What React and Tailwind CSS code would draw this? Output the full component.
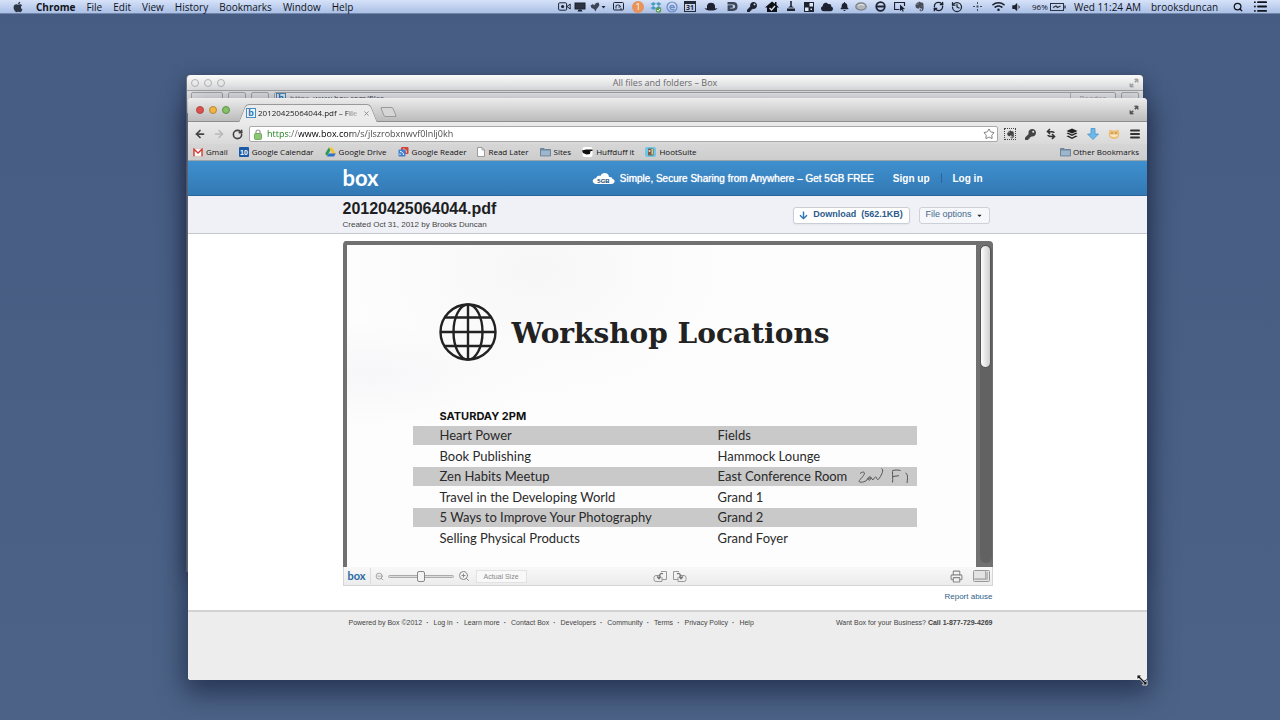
import React, { useState } from 'react';
import { RefreshCw, History, Search, Star, Menu, ArrowLeft, ArrowRight, RotateCw, X, ZoomIn, ZoomOut, Printer, List } from 'lucide-react';
import { FaApple, FaKey, FaBell, FaCloud, FaEvernote, FaWifi, FaVolumeDown, FaHome, FaArrowDown, FaCaretDown } from 'react-icons/fa';

const menus = ['File', 'Edit', 'View', 'History', 'Bookmarks', 'Window', 'Help'];

const footerLinks = ['Log in', 'Learn more', 'Contact Box', 'Developers', 'Community', 'Terms', 'Privacy Policy', 'Help'];

const workshops = [
  { name: 'Heart Power', room: 'Fields' },
  { name: 'Book Publishing', room: 'Hammock Lounge' },
  { name: 'Zen Habits Meetup', room: 'East Conference Room', note: true },
  { name: 'Travel in the Developing World', room: 'Grand 1' },
  { name: '5 Ways to Improve Your Photography', room: 'Grand 2' },
  { name: 'Selling Physical Products', room: 'Grand Foyer' },
];

const FolderIcon = () => (
  <svg width="11" height="10" viewBox="0 0 11 10">
    <path d="M.5 1.500h3.500l1 1h5.500v6.500H.5z" fill="#6f8ba8" stroke="#5a7087" strokeWidth=".7" />
    <path d="M1 3.500h9v5H1z" fill="#9db6cd" />
  </svg>
);

const GmailIcon = () => (
  <svg width="10" height="9" viewBox="0 0 10 9">
    <path d="M.5.8h9v7.400h-9z" fill="#fff" stroke="#d9a9a6" strokeWidth=".5" />
    <path d="M1 8.300V1.200l4 3.800 4-3.800v7.100" fill="none" stroke="#cf3b33" strokeWidth="1.400" />
  </svg>
);

const CalendarIcon = () => (
  <svg width="10" height="10" viewBox="0 0 10 10">
    <rect width="10" height="10" rx="1" fill="#1c5aa8" />
    <text x="5" y="7.500" fontSize="7" fontWeight="700" textAnchor="middle" fill="#fff" fontFamily="Liberation Sans, sans-serif">10</text>
  </svg>
);

const DriveIcon = () => (
  <svg width="11" height="10" viewBox="0 0 11 10">
    <path d="M3.800.5h3.200l3.800 6H7.400z" fill="#f3c52d" />
    <path d="M3.800.5 5.400 3.300 2 9.300.2 6.400z" fill="#2f9a57" />
    <path d="M3.800 6.500h7L9 9.500H2z" fill="#2f6fc9" />
  </svg>
);

const ReaderIcon = () => (
  <svg width="11" height="10" viewBox="0 0 11 10">
    <rect x="3" y="0" width="7.500" height="7" rx="1" fill="#d2443a" />
    <path d="M5 2c2 0 3.500 1.500 3.500 3.500" fill="none" stroke="#fff" strokeWidth=".9" />
    <rect x=".5" y="2.500" width="7" height="7" rx="1" fill="#3f7fd0" />
    <path d="M2 8V6.500M2 4.500c2 0 3.500 1.500 3.500 3.500" fill="none" stroke="#fff" strokeWidth="1" />
  </svg>
);

const PageIcon = () => (
  <svg width="8" height="10" viewBox="0 0 8 10">
    <path d="M.5.5h4.500l2.500 2.500v6.500h-7z" fill="#fff" stroke="#888" strokeWidth=".8" />
    <path d="M5 .5V3h2.500" fill="none" stroke="#888" strokeWidth=".7" />
  </svg>
);

const HuffIcon = () => (
  <svg width="11" height="10" viewBox="0 0 11 10">
    <rect x=".5" width="10" height="10" rx="2" fill="#fff" />
    <path d="M0 3.500 4 2.500h6.500v1.500H8.500l-.5 3-3.500.5L1 6z" fill="#111" />
  </svg>
);

const HootIcon = () => (
  <svg width="11" height="10" viewBox="0 0 11 10">
    <rect width="11" height="10" rx="2" fill="#6fc6e6" />
    <path d="M3 1.500h5.500v7H3z" fill="#75604a" />
    <circle cx="4.500" cy="4" r="1" fill="#e8e0d0" />
    <path d="M6.500 2h1.500v5.500H6.500z" fill="#d9c48e" />
  </svg>
);

const bookmarks = [
  { label: 'Gmail', Icon: GmailIcon },
  { label: 'Google Calendar', Icon: CalendarIcon },
  { label: 'Google Drive', Icon: DriveIcon },
  { label: 'Google Reader', Icon: ReaderIcon },
  { label: 'Read Later', Icon: PageIcon },
  { label: 'Sites', Icon: FolderIcon },
  { label: 'Huffduff it', Icon: HuffIcon },
  { label: 'HootSuite', Icon: HootIcon },
];

const Favicon = () => (
  <svg width="10" height="10" viewBox="0 0 10 10" className="shrink-0">
    <rect x=".5" y=".5" width="9" height="9" fill="#e9f3fb" stroke="#4b8cc0" />
    <text x="5" y="8" fontSize="9" fontWeight="700" textAnchor="middle" fill="#1d6fb2" fontFamily="Liberation Sans, sans-serif">b</text>
  </svg>
);

const ExpandIcon = ({ color }) => (
  <svg width="10" height="10" viewBox="0 0 10 10" fill={color} stroke={color}>
    <path d="M5.500 1h3.500v3.500zM1 5.500V9h3.500z" strokeWidth=".8" />
    <path d="m5.800 4.200 2-2M4.200 5.800l-2 2" strokeWidth="1.600" />
  </svg>
);

// Menu bar status icons, each in its own slot
const Slot = ({ width = 'w-5', children }) => (
  <span className={`${width} flex shrink-0 items-center justify-center`}>{children}</span>
);

const StatusIcons = () => (
  <div className="flex items-center text-[#1c2230]">
    <Slot width="w-4">
      <svg width="13" height="9" viewBox="0 0 13 9" fill="none" stroke="currentColor">
        <rect x=".6" y=".8" width="8" height="7.400" rx="1" />
        <circle cx="4.600" cy="4.500" r="1.600" fill="currentColor" stroke="none" />
        <path d="m9 4.500 3.200-2.500v5z" />
      </svg>
    </Slot>
    <Slot width="w-4">
      <svg width="12" height="10" viewBox="0 0 12 10">
        <path d="M.5.5h11v7h-11z" fill="currentColor" />
        <path d="M1.600 1.500h8.800v5H1.600z" fill="#2d3340" />
        <path d="M4.500 7.500h3L8.500 9.500h-5z" fill="currentColor" />
      </svg>
    </Slot>
    <Slot>
      <svg width="16" height="10" viewBox="0 0 16 10" fill="currentColor">
        <path d="M.5 3.500 3 2l1 1.500L6 1l2.500-.5L9.500 3 8 5.500 6.500 7l-1 2.500L4 7 1.500 6z" opacity=".8" />
        <path d="M11.500 4h4l-2 2.500z" />
      </svg>
    </Slot>
    <Slot>
      <svg width="11" height="9" viewBox="0 0 11 9" fill="none" stroke="currentColor">
        <rect x=".5" y=".5" width="10" height="7.500" rx="1" />
        <path d="M3 6.500V3.500c2-1 4.500-.5 4.500 1.500H5.500M8 6v2" strokeWidth=".9" />
      </svg>
    </Slot>
    <Slot>
      <span className="flex h-3 w-3 items-center justify-center rounded-full bg-[#e8935a] text-[9px] text-white">1</span>
    </Slot>
    <Slot width="w-4">
      <svg width="12" height="12" viewBox="0 0 12 12">
        <path d="m3.500 1-3 2L3.500 5 .5 7l3 2L6 7.500 8.500 9l3-2-3-2 3-2-3-2L6 2.800z" fill="#4f9bc4" />
        <path d="M6 2.800 3.500 5 6 6.800 8.500 5z" fill="#d5e6f4" />
        <circle cx="8.500" cy="9" r="2.800" fill="#5a9d57" />
        <path d="m7 9 1.200 1.200L10 8" stroke="#fff" fill="none" />
      </svg>
    </Slot>
    <Slot width="w-4">
      <svg width="12" height="12" viewBox="0 0 12 12" fill="none" stroke="#6c8bc4">
        <circle cx="6" cy="6" r="5" strokeWidth="1.200" />
        <path d="M4 6.300h4.300C8 3.600 4.200 3.600 4 6.300c0 2.700 3 3 4.300 1.800" strokeWidth="1.300" />
      </svg>
    </Slot>
    <Slot>
      <span className="flex h-[11px] w-[12px] items-center justify-center border border-t-3 border-[#232936] text-[7px] font-bold">31</span>
    </Slot>
    <Slot width="w-[22px]">
      <svg width="14" height="9" viewBox="0 0 14 9" fill="currentColor">
        <path d="M3 6.500V4c0-4.500 8-4.500 8 0v2.500l2.500-.3C12.500 8 10.500 8.500 7 8.500S1.500 8 .5 6.200z" />
      </svg>
    </Slot>
    <Slot>
      <svg width="11" height="9" viewBox="0 0 11 9" fill="none" stroke="#3d4656" strokeWidth="2.400">
        <path d="M.5 1.300h5.500c4.500 0 4.500 6.400 0 6.400H1.800V4.500h4" />
      </svg>
    </Slot>
    <Slot><FaKey size={10} /></Slot>
    <Slot>
      <svg width="14" height="12" viewBox="0 0 14 12">
        <path d="M7 .5 0 6.500h2V11h10V6.500h2L11.500 4V1H10v1.800z" fill="#0d1016" />
        <path d="m4.500 7 2 2 3.500-4" fill="none" stroke="#dfe7f5" strokeWidth="1.300" />
      </svg>
    </Slot>
    <Slot width="w-[18px]">
      <svg width="10" height="11" viewBox="0 0 10 11" fill="currentColor">
        <path d="M4.200 0h1.600v5H4.200zM2 6.500 5 4.500l3 2zM1 7.500h8V10H1z" />
      </svg>
    </Slot>
    <Slot width="w-[18px]">
      <svg width="10" height="10" viewBox="0 0 10 10" fill="currentColor">
        <path d="M0 0h10v10H0z" />
        <path d="M5.500 1H9v3.500H5.500zM1 5.500h3.500V9H1z" fill="#dfe7f5" />
        <path d="M6.500 6.500h1.500v1.500H6.500z" fill="#dfe7f5" />
      </svg>
    </Slot>
    <Slot width="w-[18px]"><FaCloud size={12} /></Slot>
    <Slot width="w-4"><FaBell size={9} /></Slot>
    <Slot width="w-[18px]">
      <svg width="12" height="9" viewBox="0 0 12 9" fill="#b3b6b8" stroke="#777d84">
        <ellipse cx="6" cy="4.500" rx="5.200" ry="3.600" strokeWidth="1.200" />
        <path d="M3 4c1-2 5.500-2 6 0" stroke="#eee" fill="none" />
      </svg>
    </Slot>
    <Slot>
      <svg width="11" height="11" viewBox="0 0 11 11" fill="none" stroke="currentColor">
        <circle cx="5.500" cy="5.500" r="4.300" strokeWidth="1.700" />
        <path d="M2 5.500h7" strokeWidth="2" />
      </svg>
    </Slot>
    <Slot>
      <svg width="12" height="11" viewBox="0 0 12 11">
        <path d="M5.500 8.500h-5v-7h10V5" fill="none" stroke="currentColor" strokeWidth="1.200" />
        <path d="m6 3.500 5 4.500-2.200.2 1 2-1 .6-1.100-2L6 10z" fill="currentColor" />
      </svg>
    </Slot>
    <Slot width="w-[18px]"><FaEvernote size={11} className="text-[#454c58]" /></Slot>
    <Slot><RefreshCw size={11} strokeWidth={3} /></Slot>
    <Slot width="w-[18px]"><History size={12} strokeWidth={2.5} /></Slot>
    <Slot width="w-[22px]">
      <svg width="9" height="9" viewBox="0 0 9 9" fill="#414b5c">
        <path d="M4 0h1v2H4zM4 7h1v2H4zM0 4h2v1H0zM7 4h2v1H7zM3.500 3.500h2v2h-2z" />
      </svg>
    </Slot>
    <Slot><FaWifi size={13} /></Slot>
    <Slot width="w-4"><FaVolumeDown size={10} /></Slot>
  </div>
);

const MenuBar = () => (
  <header className="flex h-[14px] items-center whitespace-nowrap border-b border-[#7286ab] bg-linear-to-b from-[#d6e2f8] to-[#abc0e6] text-[10px] leading-[14px] text-[#10131a]">
    <FaApple size={12} className="ml-3 text-[#2c3546]" />
    <nav className="ml-3 flex gap-[11px]">
      <button className="font-bold">Chrome</button>
      {menus.map((m) => (
        <button key={m}>{m}</button>
      ))}
    </nav>
    <div className="ml-auto flex items-center">
      <StatusIcons />
      <span className="ml-2 w-[18px] text-[8px]">96%</span>
      <svg width="16" height="8" viewBox="0 0 16 8" fill="none" stroke="#2b313d">
        <rect x=".5" y=".5" width="13" height="7" />
        <path d="M15 2.500v3M3 4.500l3-1.500 1.500 1.500 3-1.500" strokeWidth="1.300" />
      </svg>
      <span className="ml-[8px] w-[66px]">Wed 11:24 AM</span>
      <span className="ml-[11px] w-[68px]">brooksduncan</span>
      <button aria-label="Search" className="ml-[14px]"><Search size={10} strokeWidth={3} /></button>
      <button aria-label="Notifications" className="mr-3 ml-[10px]"><List size={15} strokeWidth={3} /></button>
    </div>
  </header>
);

const BackWindow = () => (
  <section className="absolute top-[61px] right-[137px] left-[186px] h-[497px] rounded-t-[4px] border-l border-[#6f7683] bg-[#8d939c] shadow-[0_4px_16px_rgba(20,28,50,0.5)]">
    <div className="flex h-4 items-center rounded-t-[4px] border-b border-[#a9a9a9] bg-linear-to-b from-[#fafafa] to-[#e4e4e4] px-1">
      <div className="flex gap-[5px]">
        <span className="h-2 w-2 rounded-full border border-[#b5b5b5]" />
        <span className="h-2 w-2 rounded-full border border-[#b5b5b5]" />
        <span className="h-2 w-2 rounded-full border border-[#b5b5b5]" />
      </div>
      <h2 className="flex-1 pr-6 text-center text-[9px] leading-[14px] text-[#6c6c6c]">All files and folders – Box</h2>
      <ExpandIcon color="#a5a5a5" />
    </div>
    <div className="flex h-[22px] items-start gap-[5px] overflow-hidden bg-[#e9e9e9] px-1 pt-px text-[8px] text-[#777]">
      <button aria-label="Back and forward" className="h-4 w-8 rounded-xs border border-[#aaa] leading-3">◂ ▸</button>
      <button aria-label="iCloud" className="h-4 w-[18px] rounded-xs border border-[#aaa] leading-3">☁</button>
      <button aria-label="Share" className="h-4 w-[18px] rounded-xs border border-[#aaa] leading-3">↗</button>
      <div className="flex h-4 flex-1 items-start gap-1 rounded-xs border border-[#aaa] bg-[#f3f3f3] px-px leading-[10px]">
        <Favicon />
        <span>https</span>
        <span className="text-[#444]">www.box.com/files</span>
        <span className="ml-auto border-l border-[#bbb] px-2 text-[#aaa]">Reader</span>
      </div>
      <button aria-label="Downloads" className="h-4 w-[18px] rounded-xs border border-[#aaa] leading-3">●</button>
    </div>
  </section>
);

const TabStrip = () => (
  <div className="flex h-6 items-end rounded-t-[4px] border-b border-[#8e8e8e] bg-linear-to-b from-[#ececec] to-[#bcbcbc] px-2">
    <div className="flex gap-[5px] self-center">
      <button aria-label="Close" className="h-2 w-2 rounded-full border border-[#a84c48] bg-[#e0504b]" />
      <button aria-label="Minimize" className="h-2 w-2 rounded-full border border-[#b08a3c] bg-[#f0b541]" />
      <button aria-label="Zoom" className="h-2 w-2 rounded-full border border-[#5f8f4b] bg-[#82c265]" />
    </div>
    <div className="relative isolate -mb-px ml-2 flex h-[18px] w-[140px] items-center gap-[2px] pr-2 pl-2 text-[8px] before:absolute before:inset-y-0 before:left-1 before:-z-10 before:w-1/2 before:-skew-x-[22deg] before:rounded-tl-[4px] before:border-t before:border-l before:border-[#999] before:bg-[#ebebeb] after:absolute after:inset-y-0 after:right-1 after:-z-10 after:w-[55%] after:skew-x-[22deg] after:rounded-tr-[4px] after:border-t after:border-r after:border-[#999] after:bg-[#ebebeb]">
      <Favicon />
      <span className="w-[103px] overflow-hidden whitespace-nowrap text-[#222] mask-linear-[to_right,black_85%,transparent]">20120425064044.pdf – File</span>
      <button aria-label="Close tab"><X size={7} strokeWidth={3} className="text-[#888]" /></button>
    </div>
    <button aria-label="New tab" className="mb-1 ml-1 h-[10px] w-[13px] skew-x-[22deg] rounded-xs border border-[#999] bg-[#d6d6d6]" />
    <button aria-label="Full screen" className="ml-auto self-center"><ExpandIcon color="#555" /></button>
  </div>
);

const Toolbar = () => {
  const [url, setUrl] = useState('https://www.box.com/s/jlszrobxnwvf0lnlj0kh');

  return (
    <div className="flex h-[22px] items-center bg-linear-to-b from-[#ebebeb] to-[#d9d9d9] px-[6px] pt-[2px] text-[#444]">
      <button aria-label="Back"><ArrowLeft size={12} strokeWidth={3.5} /></button>
      <button aria-label="Forward" className="ml-[7px] text-[#b8b8b8]"><ArrowRight size={12} strokeWidth={3} /></button>
      <button aria-label="Reload" className="ml-[7px]"><RotateCw size={11} strokeWidth={3.5} /></button>
      <div className="ml-[6px] flex h-4 flex-1 items-center rounded-xs border border-[#a9a9a9] bg-white pr-[2px] pl-1">
        <svg width="8" height="11" viewBox="0 0 8 11">
          <path d="M2 5V3c0-2.700 4-2.700 4 0v2" fill="none" stroke="#999" strokeWidth="1.200" />
          <rect x=".5" y="4.500" width="7" height="6" rx="1" fill="#8cc873" stroke="#5f9d4b" strokeWidth=".8" />
        </svg>
        <input
          aria-label="Address"
          value={url}
          onChange={(e) => setUrl(e.target.value)}
          className="ml-[5px] min-w-0 flex-1 bg-[linear-gradient(to_right,#127a12_23px,#666_23px_32px,#000_32px_84px,#444_84px)] bg-clip-text text-[9px] leading-3 text-transparent outline-none"
        />
        <button aria-label="Bookmark this page"><Star size={12} strokeWidth={1.5} className="text-[#555]" /></button>
      </div>
      <div className="ml-[6px] flex items-center gap-[9px]">
        <span className="flex h-3 w-3 items-center justify-center border border-dotted border-[#444]"><FaEvernote size={9} /></span>
        <FaKey size={11} />
        <svg width="12" height="12" viewBox="0 0 12 12" fill="none" stroke="#333" strokeWidth="1.600">
          <path d="M9 5c0-1.500-2-1.500-6-1.500M5 1 2.500 3.500 5 6M3 7c0 1.500 2 1.500 6 1.500M7 6l2.500 2.500L7 11" />
        </svg>
        <svg width="12" height="12" viewBox="0 0 12 12" fill="#222">
          <path d="m6 .5 5.500 2.500L6 5.500.5 3z" />
          <path d="m.5 5.200 1.500-.6 4 1.900 4-1.900 1.500.6L6 7.900zM.5 8.200 2 7.600l4 1.900 4-1.900 1.500.6L6 11z" />
        </svg>
        <svg width="12" height="12" viewBox="0 0 12 12">
          <path d="M4 .5h4v5.500h3.500L6 11.500.5 6H4z" fill="#6bb8ea" stroke="#4a94c9" strokeWidth=".8" />
        </svg>
        <svg width="12" height="12" viewBox="0 0 12 12">
          <path d="M.8 4.500 1.800 1.500 4 2.500h4l2.200-1 1 3C12 9 9 11 6 11S0 9 .8 4.500z" fill="#edbd74" />
          <path d="M2 6.500h8c-.5 3.500-7.500 3.500-8 0z" fill="#f8e6c4" />
          <path d="M3.500 5h1M7.500 5h1" stroke="#6d4d22" />
        </svg>
        <button aria-label="Menu"><Menu size={12} strokeWidth={4} className="text-[#333]" /></button>
      </div>
    </div>
  );
};

const BookmarksBar = () => (
  <nav className="flex h-[17px] items-center gap-[11px] whitespace-nowrap border-b border-[#9aa3a8] bg-linear-to-b from-[#d6d6d6] to-[#cdcdcd] px-[5px] text-[8px] text-[#111]">
    {bookmarks.map(({ label, Icon }) => (
      <a key={label} href="#" className="flex items-center gap-[3px]">
        <Icon />
        {label}
      </a>
    ))}
    <a href="#" className="mr-[3px] ml-auto flex items-center gap-[2px]">
      <FolderIcon />
      Other Bookmarks
    </a>
  </nav>
);

const BoxHeader = () => (
  <div className="h-[35px] border-b border-[#2a669b] bg-linear-to-b from-[#3f90cf] to-[#3279b4] text-[10px] text-white">
    <div className="mx-auto flex h-full max-w-[650px] items-center whitespace-nowrap pr-[10px]">
      <a href="#" className="font-[Lato,sans-serif] text-[22px] leading-6 font-bold">box</a>
      <a href="#" className="ml-auto flex items-center gap-[5px]">
        <svg width="23" height="13" viewBox="0 0 23 13">
          <path d="M4.500 12C-.5 12-.5 6.500 4 6.200 5 3.500 7.500 3.500 8.500 4c1-4.500 8.500-4 8.500 1 2-.3 3.500.5 3.500 2 3.500.8 2.500 5-1.500 5z" fill="#fff" />
          <text x="11.500" y="10.500" fontSize="6" fontWeight="700" textAnchor="middle" fill="#17456e" fontFamily="Liberation Sans, sans-serif">5GB</text>
        </svg>
        <span className="text-shadow-[0_0_1px_#fff]">Simple, Secure Sharing from Anywhere – Get 5GB FREE</span>
      </a>
      <a href="#" className="ml-[19px] font-bold">Sign up</a>
      <span className="mx-[11px] h-[10px] w-px bg-[#2a669b]" />
      <a href="#" className="font-bold">Log in</a>
    </div>
  </div>
);

const FileBar = () => (
  <div className="h-[38px] border-b border-[#c6c8cf] bg-[#f0f1f7]">
    <div className="mx-auto flex h-full max-w-[650px] items-center gap-[9px] pt-px pr-[3px]">
      <div className="mr-auto">
        <h1 className="text-[16px] leading-5 font-bold text-[#1d1f22]">20120425064044.pdf</h1>
        <p className="text-[8px] leading-3 text-[#444]">Created Oct 31, 2012 by Brooks Duncan</p>
      </div>
      <button className="flex h-[17px] w-[117px] items-center justify-center gap-[5px] rounded-[3px] border border-[#c9ced6] bg-white text-[9px] font-bold whitespace-nowrap text-[#2d5b8c] shadow-xs">
        <FaArrowDown size={9} className="shrink-0 text-[#2f75b5]" />
        <span>Download</span>
        <span>(562.1KB)</span>
      </button>
      <button aria-haspopup="menu" className="flex h-[17px] w-[71px] items-center justify-center gap-1 rounded-[3px] border border-[#cdd0d7] bg-[#f6f7fa] text-[9px] whitespace-nowrap text-[#44698f]">
        File options
        <FaCaretDown size={7} className="text-[#222]" />
      </button>
    </div>
  </div>
);

const Globe = () => (
  <svg width="58" height="58" viewBox="0 0 58 58" fill="none" stroke="#222" strokeWidth="2.400" className="shrink-0">
    <circle cx="29" cy="29" r="27.500" />
    <ellipse cx="29" cy="29" rx="14.500" ry="27.500" />
    <path d="M29 1.500v55M1.500 29h55M6 14.500h46M6 43h46" />
  </svg>
);

const Handwriting = () => (
  <svg width="54" height="17" viewBox="0 0 54 17" fill="none" stroke="#555" strokeWidth="1" className="shrink-0">
    <path d="M3 5.500C6 3 9 4 6.500 7.500 4 11 1 13 2.500 14c2 .8 6-.5 7.500-2 .5-3 4-4.500 4-2s-3.500 3-2.500.5c2-1 3.500-.5 4.500 1.500 1-2 2.500-4 3.500-2.500 0 2 1.500 3 3 .5 2.500-4 4.500-8 2-9.500" />
    <path d="M35.500 3.500c0 4 .5 7 0 11M35 3c3-1.500 6-1 8.500-.5M36 8.500l6-.8M48.500 5c2 .5 2.500 4 1.500 10" />
  </svg>
);

const Scan = () => (
  <article className="flex-1 overflow-hidden bg-[#fdfdfd] bg-[radial-gradient(ellipse_at_30%_8%,#f7f7f8,transparent_30%),radial-gradient(ellipse_at_4%_40%,#f7f7f9,transparent_20%)] pt-[58px] font-[Lato,sans-serif] text-[13px] text-[#2a2a2a]">
    <div className="flex items-center gap-[15px] pl-[92px]">
      <Globe />
      <h2 className="pt-1 font-['DejaVu_Serif',serif] text-[28px] leading-8 font-bold whitespace-nowrap text-[#222]">Workshop Locations</h2>
    </div>
    <table className="mt-[45px] ml-[66px] w-[504px] table-fixed border-collapse">
      <thead>
        <tr className="h-[20px] text-left font-[Inter,sans-serif] text-[11px] leading-5">
          <th className="w-[305px] pl-[27px] text-[#111]">SATURDAY 2PM</th>
          <th />
        </tr>
      </thead>
      <tbody>
        {workshops.map(({ name, room, note }) => (
          <tr key={name} className="h-[22px] leading-[19px] whitespace-nowrap odd:h-[19px] odd:bg-[#c9c9c9]">
            <td className="py-0 pl-[27px]">{name}</td>
            <td className="py-0">
              <div className="flex h-[19px] items-center gap-[10px]">
                {room}
                {note && <Handwriting />}
              </div>
            </td>
          </tr>
        ))}
      </tbody>
    </table>
  </article>
);

const Preview = () => {
  const [zoom, setZoom] = useState(50);

  return (
    <div className="mx-auto mt-[7px] max-w-[650px]">
      <div className="flex h-[326px] rounded-t-[4px] border-t-4 border-l-4 border-[#707070] bg-[#707070]">
        <Scan />
        <div className="w-[17px] pl-[4px]">
          <div className="h-[318px] w-3 rounded-full bg-[#626262]">
            <div className="h-[123px] w-[11px] rounded-full border border-[#555] bg-linear-to-r from-[#fdfdfd] to-[#cfcfcf]" />
          </div>
        </div>
      </div>
      <div className="flex h-[19px] items-center border border-t-0 border-[#d5d5d5] bg-linear-to-b from-[#f8f8f8] to-[#ececec] pr-[2px] pl-1 text-[#888]">
        <span className="font-[Lato,sans-serif] text-[11px] leading-4 font-bold text-[#2b6aa3]">box</span>
        <span className="mx-1 h-4 w-px bg-[#ddd]" />
        <button aria-label="Zoom out"><ZoomOut size={9} /></button>
        <input
          type="range"
          aria-label="Zoom level"
          value={zoom}
          onChange={(e) => setZoom(e.target.value)}
          className="mx-1 h-[3px] w-[66px] appearance-none rounded-full border border-[#aaa] bg-[#ddd] [&::-webkit-slider-thumb]:h-[11px] [&::-webkit-slider-thumb]:w-2 [&::-webkit-slider-thumb]:appearance-none [&::-webkit-slider-thumb]:rounded-xs [&::-webkit-slider-thumb]:border [&::-webkit-slider-thumb]:border-[#888] [&::-webkit-slider-thumb]:bg-[#f3f3f3]"
        />
        <button aria-label="Zoom in"><ZoomIn size={12} /></button>
        <button className="ml-[6px] h-[13px] w-[51px] border border-[#e2e2e2] bg-[#f8f8f8] text-[7px] leading-[11px]">Actual Size</button>
        <div className="ml-[126px] flex gap-[6px]">
          <button aria-label="Rotate left">
            <svg width="14" height="11" viewBox="0 0 14 11" fill="none" stroke="#999">
              <path d="M8 .5h5.500v8H9M7.500 4.500H3a2 2 0 0 0-2 2v2a2 2 0 0 0 2 2h6V6" />
              <path d="M10 3C8 1.500 6 3 6 7M4 5.500l2 2.300 2-2.300" stroke="#777" strokeWidth="1.200" />
            </svg>
          </button>
          <button aria-label="Rotate right">
            <svg width="14" height="11" viewBox="0 0 14 11" fill="none" stroke="#999" className="-scale-x-100">
              <path d="M8 .5h5.500v8H9M7.500 4.500H3a2 2 0 0 0-2 2v2a2 2 0 0 0 2 2h6V6" />
              <path d="M10 3C8 1.500 6 3 6 7M4 5.500l2 2.300 2-2.300" stroke="#777" strokeWidth="1.200" />
            </svg>
          </button>
        </div>
        <button aria-label="Print" className="ml-auto"><Printer size={13} /></button>
        <button aria-label="Full screen" className="ml-[10px]">
          <svg width="17" height="12" viewBox="0 0 17 12">
            <rect x=".5" y=".5" width="16" height="11" rx="1" fill="#e4e4e4" stroke="#999" />
            <path d="M2 10V8.500h10.500v-6.500H15V10z" fill="#bbb" />
            <path d="M12.500 1v8H1" fill="none" stroke="#aaa" />
          </svg>
        </button>
      </div>
      <div className="flex h-6 justify-end pt-1 text-[8px] leading-[14px]">
        <a href="#" className="text-[#2f5f8a]">Report abuse</a>
      </div>
    </div>
  );
};

const BoxFooter = () => (
  <footer className="min-h-[70px] rounded-b-[3px] border-t-2 border-[#d2d2d2] bg-[#ededed] pt-[6px] text-[7px] leading-[10px] text-[#444]">
    <div className="mx-auto flex max-w-[650px] pl-[6px] whitespace-nowrap">
      <span>Powered by Box ©2012</span>
      {footerLinks.map((link) => (
        <React.Fragment key={link}>
          <span className="mr-[5px] ml-1 font-bold">·</span>
          <a href="#">{link}</a>
        </React.Fragment>
      ))}
      <span className="ml-auto">Want Box for your Business? <b>Call 1-877-729-4269</b></span>
    </div>
  </footer>
);

const App = () => (
  <div className="flex min-h-screen flex-col bg-[#4a6086] bg-linear-to-b from-[#465c82] to-[#4c6387] font-['Open_Sans','Noto_Sans',sans-serif]">
    <MenuBar />
    <main className="relative flex-1 overflow-hidden pt-[84px] pr-[133px] pb-10 pl-[188px]">
      <BackWindow />
      <section className="relative rounded-t-[4px] rounded-b-[3px] bg-white shadow-[0_10px_26px_4px_rgba(22,30,58,0.65)]">
        <TabStrip />
        <Toolbar />
        <BookmarksBar />
        <div className="font-['Liberation_Sans',Arial,sans-serif]">
          <BoxHeader />
          <FileBar />
          <Preview />
          <BoxFooter />
        </div>
        {/* resize cursor on the window corner */}
        <svg width="12" height="12" viewBox="0 0 12 12" className="absolute -right-px -bottom-[6px]">
          <path d="M1 1h4.500L4.200 2.800l5 5L11 6.500V11H6.500l1.300-1.800-5-5L1 5.500z" fill="#111" stroke="#fff" strokeWidth=".8" />
        </svg>
      </section>
    </main>
  </div>
);

export default App;
